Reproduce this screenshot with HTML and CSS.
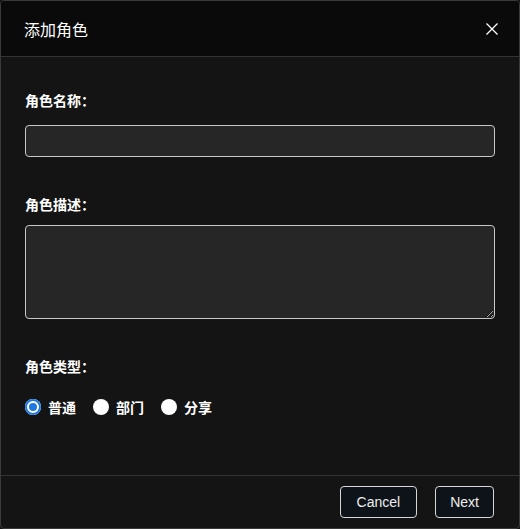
FILE: index.html
```html
<!DOCTYPE html>
<html lang="zh-CN">
<head>
  <meta charset="UTF-8" />
  <meta name="viewport" content="width=device-width, initial-scale=1.0"/>
  <title>添加角色</title>
  <link rel="stylesheet" href="styles.css">
</head>
<body>
  <div class="dialog">
    <div class="dialog-header">
      <h2>添加角色</h2>
      <button type="button" class="close" aria-label="关闭">
        <svg width="12" height="12" viewBox="0 0 12 12">
          <path d="M0.5 0.5 L11.5 11.5 M11.5 0.5 L0.5 11.5" stroke="#fff" stroke-width="1.3" fill="none"/>
        </svg>
      </button>
    </div>

    <form class="dialog-body">
      <label for="roleName" class="label label-name">角色名称：</label>
      <input type="text" id="roleName" name="roleName" />

      <label for="roleDesc" class="label label-desc">角色描述：</label>
      <textarea id="roleDesc" name="roleDesc"></textarea>

      <div class="label label-type">角色类型：</div>
      <div class="radios">
        <label><input type="radio" name="type" value="normal" checked /> 普通</label>
        <label><input type="radio" name="type" value="dept" /> 部门</label>
        <label><input type="radio" name="type" value="share" /> 分享</label>
      </div>
    </form>

    <div class="dialog-footer">
      <button type="button" class="btn btn-cancel">Cancel</button>
      <button type="button" class="btn">Next</button>
    </div>
  </div>
</body>
</html>
```

FILE: styles.css
```css
html, body {
  height: 100%;
  margin: 0;
  padding: 0;
  background-color: #141414;
  font-family: "Noto Sans CJK SC", "Liberation Sans", sans-serif;
  overflow: hidden;
}

.dialog {
  height: 100%;
  box-sizing: border-box;
  display: flex;
  flex-direction: column;
  background-color: #141414;
  border: 1px solid #3a3a3a;
  border-radius: 4px;
  overflow: hidden;
}

.dialog-header {
  height: 55px;
  flex-shrink: 0;
  display: flex;
  align-items: center;
  justify-content: space-between;
  padding: 0 21px 0 23px;
  background-color: #0a0a0a;
  border-bottom: 1px solid #333;
}

.dialog-header h2 {
  margin: 0;
  color: #fff;
  font-size: 16px;
  font-weight: normal;
  line-height: 20px;
}

.close {
  background: none;
  border: none;
  padding: 0;
  width: 12px;
  height: 12px;
  cursor: pointer;
  display: flex;
}

.dialog-body {
  flex: 1;
  display: flex;
  flex-direction: column;
  padding: 33px 24px 0 24px;
}

.label {
  display: block;
  color: #fff;
  font-size: 14px;
  font-weight: bold;
  line-height: 20px;
}

.label-name {
  margin-bottom: 15px;
}

.label-desc {
  margin-top: 37px;
  margin-bottom: 11px;
}

.label-type {
  margin-top: 37px;
  margin-bottom: 21px;
}

input[type="text"],
textarea {
  box-sizing: border-box;
  width: 100%;
  margin: 0;
  background-color: #262626;
  border: 1px solid #c8c8c8;
  border-radius: 4px;
  color: #fff;
  font-family: inherit;
  font-size: 13px;
  padding: 6px 10px;
  outline: none;
}

input[type="text"] {
  height: 32px;
}

textarea {
  height: 94px;
  display: block;
  resize: vertical;
}

.radios {
  display: flex;
  align-items: center;
  gap: 17px;
}

.radios label {
  display: flex;
  align-items: center;
  gap: 7px;
  color: #fff;
  font-size: 14px;
  font-weight: bold;
  line-height: 20px;
  cursor: pointer;
}

input[type="radio"] {
  appearance: none;
  -webkit-appearance: none;
  width: 16px;
  height: 16px;
  margin: 0;
  border-radius: 50%;
  background-color: #fff;
  cursor: pointer;
}

input[type="radio"]:checked {
  background-color: #1f78e0;
  box-shadow: inset 0 0 0 2px #1f78e0, inset 0 0 0 4px #fff;
}

.dialog-footer {
  flex-shrink: 0;
  display: flex;
  justify-content: flex-end;
  gap: 18px;
  padding: 10px 25px 10px 0;
  border-top: 1px solid #333;
}

.btn {
  height: 32px;
  padding: 0 14px;
  background-color: #0e1319;
  color: #eee;
  border: 1px solid #d6d6d6;
  border-radius: 4px;
  font-family: "Liberation Sans", Arial, sans-serif;
  font-size: 14px;
  cursor: pointer;
}

.btn-cancel {
  padding: 0 16px;
}

.btn:hover {
  background-color: #1b222b;
}
```
